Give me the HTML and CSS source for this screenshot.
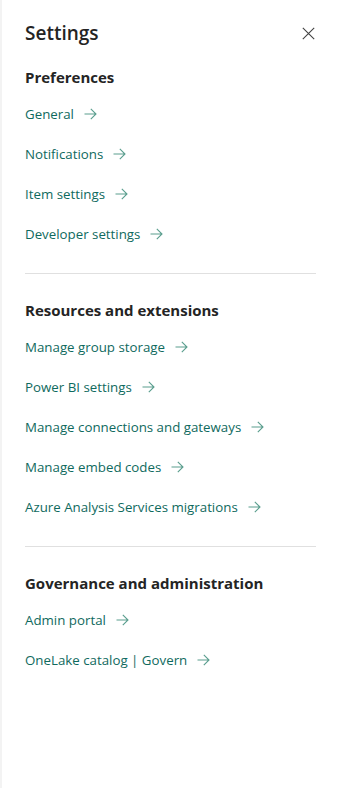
FILE: index.html
```html
<!DOCTYPE html>
<html lang="en">
<head>
  <meta charset="UTF-8">
  <meta name="viewport" content="width=device-width, initial-scale=1.0">
  <title>Settings</title>
  <link rel="stylesheet" href="styles.css">
</head>
<body>
  <aside class="panel">
    <div class="panel-head">
      <h1>Settings</h1>
      <button class="close" aria-label="Close">
        <svg width="13" height="13" viewBox="0 0 13 13"><path d="M0.8 0.8 L12.2 12.2 M12.2 0.8 L0.8 12.2" stroke="#424242" stroke-width="1.1" fill="none"/></svg>
      </button>
    </div>

    <section class="group">
      <h2>Preferences</h2>
      <ul class="links">
        <li><a href="#">General</a></li>
        <li><a href="#">Notifications</a></li>
        <li><a href="#">Item settings</a></li>
        <li><a href="#">Developer settings</a></li>
      </ul>
    </section>

    <hr class="divider">

    <section class="group">
      <h2>Resources and extensions</h2>
      <ul class="links">
        <li><a href="#">Manage group storage</a></li>
        <li><a href="#">Power BI settings</a></li>
        <li><a href="#">Manage connections and gateways</a></li>
        <li><a href="#">Manage embed codes</a></li>
        <li><a href="#">Azure Analysis Services migrations</a></li>
      </ul>
    </section>

    <hr class="divider">

    <section class="group">
      <h2>Governance and administration</h2>
      <ul class="links">
        <li><a href="#">Admin portal</a></li>
        <li><a href="#">OneLake catalog | Govern</a></li>
      </ul>
    </section>
  </aside>
</body>
</html>
```

FILE: styles.css
```css
body {
  margin: 0;
  font-family: "Open Sans", "Noto Sans", sans-serif;
  background: #fff;
}

.panel {
  box-sizing: border-box;
  min-height: 788px;
  padding: 19px 25px 0 25px;
  border-left: 2px solid #f3f3f3;
}

.panel-head {
  display: flex;
  align-items: center;
  justify-content: space-between;
}

.panel-head h1 {
  margin: 0 0 0 -2px;
  font-size: 19px;
  line-height: 28px;
  font-weight: 600;
  color: #242424;
}

.close {
  border: 0;
  background: none;
  padding: 0;
  width: 13px;
  height: 13px;
  display: flex;
  margin-right: 1px;
}

.group h2 {
  margin: 19px 0 6px -2px;
  font-size: 15px;
  line-height: 22px;
  font-weight: 700;
  color: #242424;
}

.divider + .group h2 {
  margin-top: 25px;
}

.links {
  list-style: none;
  margin: 0;
  padding: 0;
}

.links li {
  height: 40px;
  display: flex;
  align-items: center;
}

.links a {
  margin-left: -2px;
  display: flex;
  align-items: center;
  gap: 10px;
  font-size: 13.3px;
  color: #0f6a5e;
  text-decoration: none;
}

.links a::after {
  content: "";
  width: 13px;
  height: 12px;
  background: url("data:image/svg+xml,%3Csvg xmlns='http://www.w3.org/2000/svg' width='13' height='12' viewBox='0 0 13 12'%3E%3Cpath d='M0.5 6 H12 M6.8 0.8 L12 6 L6.8 11.2' stroke='%235a9e8e' stroke-width='1.1' fill='none'/%3E%3C/svg%3E") no-repeat;
}

.divider {
  border: 0;
  border-top: 1px solid #e0e0e0;
  margin: 19px 0 0 -2px;
}
```
